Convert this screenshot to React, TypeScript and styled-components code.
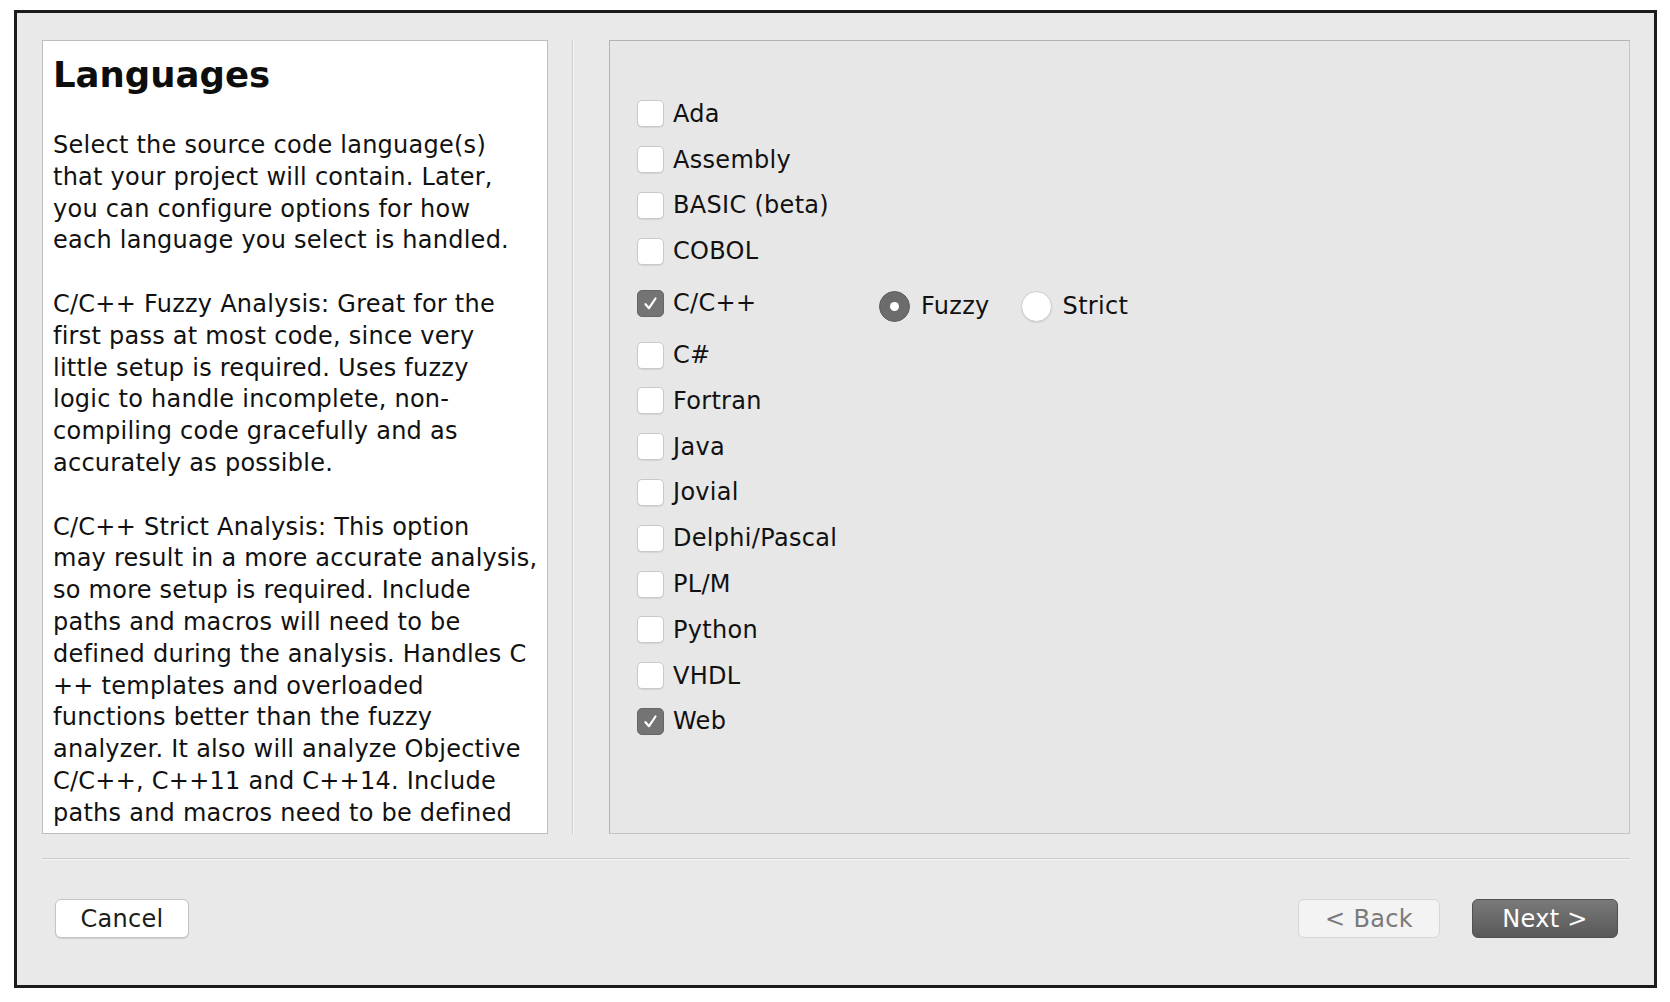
import React from "react";
import styled, { createGlobalStyle } from "styled-components";

const Global = createGlobalStyle`
  html, body { margin: 0; padding: 0; background: #ffffff; }
  body { font-family: "DejaVu Sans", "Liberation Sans", sans-serif; }
`;

const Window = styled.div`
  box-sizing: border-box;
  margin: 10px 0 0 14px;
  width: 1643px;
  height: 978px;
  border: 3px solid #1c1c1c;
  background: #e9e9e9;
  padding: 27px 24px 0 25px;
  display: flex;
  flex-direction: column;
`;

const Main = styled.div`
  display: flex;
  height: 794px;
`;

const InfoPanel = styled.div`
  box-sizing: border-box;
  width: 506px;
  height: 100%;
  background: #ffffff;
  border: 1px solid #bdbdbd;
  padding: 13px 8px 0 10px;
  overflow: hidden;
  color: #111111;
`;

const Heading = styled.h1`
  margin: 0;
  font-size: 35.5px;
  line-height: 42px;
  font-weight: bold;
  color: #0d0d0d;
`;

const Body = styled.div`
  margin-top: 34px;
  font-size: 24px;
  line-height: 31.8px;
  letter-spacing: 0.25px;
`;

const Para = styled.p`
  margin: 0 0 31.8px 0;
`;

const Line = styled.span`
  display: block;
  white-space: pre;
`;

const Divider = styled.div`
  width: 1px;
  margin: 0 35px 0 24px;
  background: #cdcdcd;
  border-right: 1px solid #f7f7f7;
`;

const OptionsPanel = styled.div`
  box-sizing: border-box;
  flex: 1;
  height: 100%;
  background: #e7e7e7;
  border: 1px solid #c4c4c4;
  border-top-color: #b3b3b3;
  border-left-color: #b3b3b3;
  padding: 50px 0 0 27px;
  display: flex;
  flex-direction: column;
`;

const Row = styled.div<{ $tall?: boolean }>`
  display: flex;
  align-items: center;
  height: ${(p) => (p.$tall ? 58 : 45.8)}px;
  font-size: 24px;
  letter-spacing: 0.3px;
  color: #111111;
`;

const Box = styled.span<{ $checked?: boolean }>`
  box-sizing: border-box;
  width: 27px;
  height: 27px;
  border-radius: 5px;
  display: inline-flex;
  align-items: center;
  justify-content: center;
  background: ${(p) => (p.$checked ? "#747474" : "#ffffff")};
  border: 1px solid ${(p) => (p.$checked ? "#666666" : "#c9c9c9")};
  box-shadow: ${(p) => (p.$checked ? "none" : "0 1px 1px rgba(0,0,0,0.08)")};
  flex-shrink: 0;
`;

const Label = styled.span<{ $width?: number }>`
  margin-left: 9px;
  ${(p) => (p.$width ? `width: ${p.$width}px;` : "")}
`;

const Radio = styled.span<{ $checked?: boolean }>`
  box-sizing: border-box;
  width: 31px;
  height: 31px;
  border-radius: 50%;
  display: inline-flex;
  align-items: center;
  justify-content: center;
  margin-top: 6px;
  background: ${(p) => (p.$checked ? "#6c6c6c" : "#ffffff")};
  border: 1px solid ${(p) => (p.$checked ? "#5e5e5e" : "#cbcbcb")};
  box-shadow: ${(p) => (p.$checked ? "none" : "0 1px 1px rgba(0,0,0,0.08)")};
  flex-shrink: 0;
`;

const Dot = styled.span`
  width: 9px;
  height: 9px;
  border-radius: 50%;
  background: #ffffff;
`;

const RadioLabel = styled.span<{ $gapAfter?: number }>`
  margin: 6px ${(p) => p.$gapAfter ?? 0}px 0 11px;
`;

const Separator = styled.div`
  margin-top: 24px;
  height: 1px;
  background: #cbcbcb;
  border-bottom: 1px solid #f4f4f4;
`;

const Footer = styled.div`
  display: flex;
  align-items: center;
  margin-top: 39px;
  padding: 0 12px 0 13px;
`;

const Spacer = styled.div`
  flex: 1;
`;

const Button = styled.button<{ $variant?: "default" | "disabled" | "primary"; $w: number }>`
  box-sizing: border-box;
  width: ${(p) => p.$w}px;
  height: 39px;
  border-radius: 6px;
  font-family: "DejaVu Sans", "Liberation Sans", sans-serif;
  font-size: 24px;
  letter-spacing: 0.3px;
  padding: 0;
  cursor: default;
  ${(p) =>
    p.$variant === "primary"
      ? `background: linear-gradient(#7a7a7a, #585858); color: #ffffff; border: 1px solid #505050; margin-left: 32px;`
      : p.$variant === "disabled"
      ? `background: #f3f3f3; color: #7a7a7a; border: 1px solid #d6d6d6;`
      : `background: #ffffff; color: #1c1c1c; border: 1px solid #c4c4c4; box-shadow: 0 1px 1px rgba(0,0,0,0.12);`}
`;

const Check = () => (
  <svg width="17" height="17" viewBox="0 0 17 17">
    <path d="M3.5 9.2 L7 13.2 L13.5 3.5" fill="none" stroke="#ffffff" strokeWidth="2.2" strokeLinecap="round" strokeLinejoin="round" />
  </svg>
);

const languages: { name: string; checked?: boolean }[] = [
  { name: "Ada" },
  { name: "Assembly" },
  { name: "BASIC (beta)" },
  { name: "COBOL" },
  { name: "C/C++", checked: true },
  { name: "C#" },
  { name: "Fortran" },
  { name: "Java" },
  { name: "Jovial" },
  { name: "Delphi/Pascal" },
  { name: "PL/M" },
  { name: "Python" },
  { name: "VHDL" },
  { name: "Web", checked: true },
];

const paragraphs: string[][] = [
  [
    "Select the source code language(s)",
    "that your project will contain. Later,",
    "you can configure options for how",
    "each language you select is handled.",
  ],
  [
    "C/C++ Fuzzy Analysis: Great for the",
    "first pass at most code, since very",
    "little setup is required. Uses fuzzy",
    "logic to handle incomplete, non-",
    "compiling code gracefully and as",
    "accurately as possible.",
  ],
  [
    "C/C++ Strict Analysis: This option",
    "may result in a more accurate analysis,",
    "so more setup is required. Include",
    "paths and macros will need to be",
    "defined during the analysis. Handles C",
    "++ templates and overloaded",
    "functions better than the fuzzy",
    "analyzer. It also will analyze Objective",
    "C/C++, C++11 and C++14. Include",
    "paths and macros need to be defined",
  ],
];

export default function App() {
  return (
    <>
      <Global />
      <Window>
        <Main>
          <InfoPanel>
            <Heading>Languages</Heading>
            <Body>
              {paragraphs.map((p, i) => (
                <Para key={i}>
                  {p.map((l, j) => (
                    <Line key={j}>{l}</Line>
                  ))}
                </Para>
              ))}
            </Body>
          </InfoPanel>
          <Divider />
          <OptionsPanel>
            {languages.map((lang) => {
              const isC = lang.name === "C/C++";
              return (
                <Row key={lang.name} $tall={isC}>
                  <Box $checked={lang.checked}>{lang.checked && <Check />}</Box>
                  <Label $width={isC ? 206 : undefined}>{lang.name}</Label>
                  {isC && (
                    <>
                      <Radio $checked>
                        <Dot />
                      </Radio>
                      <RadioLabel $gapAfter={31}>Fuzzy</RadioLabel>
                      <Radio />
                      <RadioLabel>Strict</RadioLabel>
                    </>
                  )}
                </Row>
              );
            })}
          </OptionsPanel>
        </Main>
        <Separator />
        <Footer>
          <Button $w={134}>Cancel</Button>
          <Spacer />
          <Button $w={142} $variant="disabled">
            &lt; Back
          </Button>
          <Button $w={146} $variant="primary">
            Next &gt;
          </Button>
        </Footer>
      </Window>
    </>
  );
}
